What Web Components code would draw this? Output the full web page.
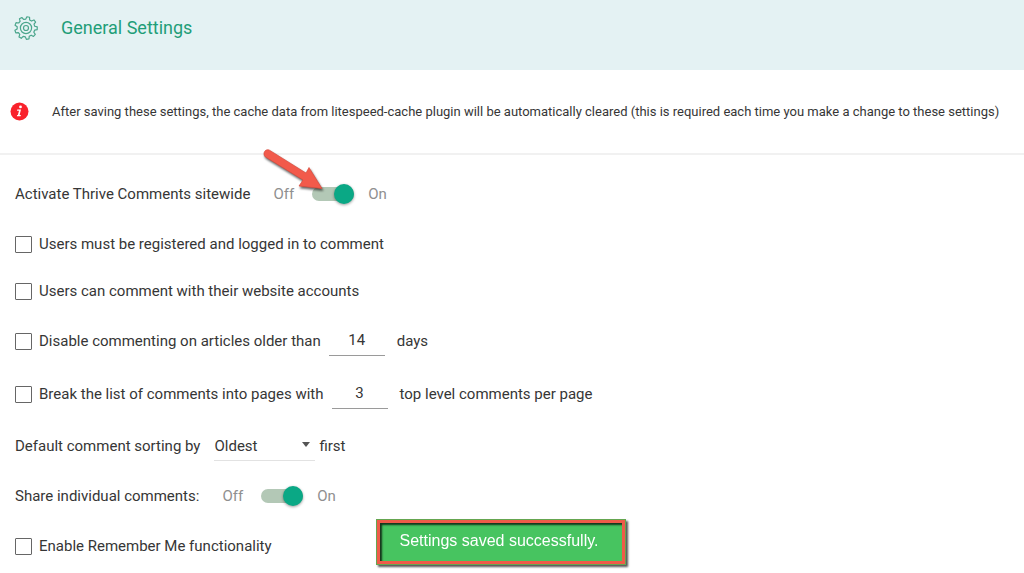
<!DOCTYPE html>
<html lang="en">
<head>
<meta charset="utf-8">
<title>General Settings</title>
<style>
  body { margin: 0; background: #fff; color: #363636; font: 15px/20px Roboto, "Liberation Sans", sans-serif; }
</style>
</head>
<body>
<settings-page></settings-page>

<template id="settings-page">
  <style>
    :host { display: block; }
    main { display: flex; flex-direction: column; padding: 14px 15px 0; }
  </style>
  <settings-header>General Settings</settings-header>
  <settings-notice>After saving these settings, the cache data from litespeed-cache plugin will be automatically cleared (this is required each time you make a change to these settings)</settings-notice>
  <main>
    <toggle-row style="--row: 50px" label="Activate Thrive Comments sitewide" pointed></toggle-row>
    <check-row style="--row: 50px" label="Users must be registered and logged in to comment"></check-row>
    <check-row style="--row: 44px" label="Users can comment with their website accounts"></check-row>
    <check-row style="--row: 56px" label="Disable commenting on articles older than" value="14">days</check-row>
    <check-row style="--row: 50px" label="Break the list of comments into pages with" value="3">top level comments per page</check-row>
    <select-row style="--row: 54px" label="Default comment sorting by">first</select-row>
    <toggle-row style="--row: 46px" label="Share individual comments:"></toggle-row>
    <check-row style="--row: 54px" label="Enable Remember Me functionality"></check-row>
  </main>
  <toast-message>Settings saved successfully.</toast-message>
</template>

<template id="settings-header">
  <style>
    :host { display: block; background: #e4f2f3; }
    header { display: flex; align-items: center; gap: 23px; height: 56px; padding: 0 14px 14px; }
    svg { width: 24px; height: 24px; flex: none; }
    h1 { margin: 0; font-size: 18px; line-height: 24px; font-weight: 400; color: #1f9e78; }
  </style>
  <header>
    <svg viewBox="0 0 24 24" fill="none" stroke="#4ba68c" stroke-width="1.2" stroke-linejoin="round" aria-hidden="true">
      <path id="gear"/>
      <circle cx="12" cy="12" r="5.6"/><circle cx="12" cy="12" r="2.5"/>
    </svg>
    <h1><slot></slot></h1>
  </header>
</template>

<template id="settings-notice">
  <style>
    :host { display: flex; align-items: center; gap: 23px; height: 83px; padding-left: 10px; border-bottom: 2px solid #f1f1f1; font-size: 13px; }
    svg { width: 19px; height: 19px; flex: none; }
    p { margin: 0; }
  </style>
  <svg viewBox="0 0 19 19" aria-hidden="true">
    <circle cx="9.5" cy="9.5" r="9" fill="#f9222c"/>
    <circle cx="10.5" cy="4.9" r="1.4" fill="#fff"/>
    <path d="M7.3 7.4H11l-1.4 5.6h1.3l-.3 1.3H6.9l.3-1.3h.7L9 8.7H7z" fill="#fff"/>
  </svg>
  <p><slot></slot></p>
</template>

<template id="check-row">
  <style>
    :host { display: flex; align-items: center; min-height: var(--row); }
    label { display: flex; align-items: center; gap: 7px; }
    input[type=checkbox] { appearance: none; box-sizing: border-box; width: 17px; height: 17px; margin: 0; border: 1px solid #666; border-radius: 1px; background: #fff; flex: none; }
    input[type=checkbox]:checked { background: #0fa683; }
    .number { box-sizing: border-box; width: 56px; height: 30px; margin: 0 12px 0 8px; padding: 0 0 2px; border: 0; border-bottom: 1px solid #9a9a9a; background: none; color: inherit; font: inherit; text-align: center; outline: 0; }
  </style>
  <label><input type="checkbox"><span class="text"></span></label>
  <input class="number" type="text" inputmode="numeric">
  <span><slot></slot></span>
</template>

<template id="toggle-row">
  <style>
    :host { display: flex; align-items: center; min-height: var(--row); }
    label { display: flex; align-items: center; gap: 23px; }
    .switch { position: relative; display: flex; align-items: center; gap: 14px; color: #8f8f8f; }
    .off { margin-right: 4px; }
    input { appearance: none; display: flex; align-items: center; justify-content: flex-end; width: 42px; height: 14px; margin: 0; border-radius: 7px; background: #b3c8b6; }
    input::before { content: ""; width: 20px; height: 20px; border-radius: 50%; background: #0aa885; box-shadow: 0 1px 3px #0006; }
    input:not(:checked) { justify-content: flex-start; }
    svg { display: none; position: absolute; left: -12px; top: -35px; width: 64px; height: 44px; overflow: visible; pointer-events: none; filter: drop-shadow(1px 2px 1px #0009); }
    :host([pointed]) svg { display: block; }
  </style>
  <label>
    <span class="text"></span>
    <span class="switch">
      <span class="off">Off</span>
      <input type="checkbox" role="switch" checked>
      <span>On</span>
      <svg viewBox="0 0 64 44" aria-hidden="true"><path d="M8.500 1.200C4-1 1 5 4.500 8L42 31l-4 6 23 2.500L48 18.500l-3 5.500z" fill="#f25a4b" stroke="#d84a3c" stroke-width=".7"/></svg>
    </span>
  </label>
</template>

<template id="select-row">
  <style>
    :host { display: flex; align-items: center; gap: 4px; min-height: var(--row); }
    .field { display: grid; align-items: center; margin-left: 10px; width: 101px; }
    select, svg { grid-area: 1 / 1; }
    select { appearance: none; width: 100%; height: 29px; margin: 0; padding: 0; border: 0; border-bottom: 1px solid #e2e2e2; border-radius: 0; background: none; color: inherit; font: inherit; outline: 0; }
    svg { justify-self: end; width: 8px; height: 5px; margin: 0 5px 3px 0; pointer-events: none; }
  </style>
  <label for="sort"></label>
  <span class="field">
    <select id="sort"><option>Oldest</option><option>Newest</option></select>
    <svg viewBox="0 0 8 5" aria-hidden="true"><path d="M0 0h8L4 5z" fill="#555"/></svg>
  </span>
  <span><slot></slot></span>
</template>

<template id="toast-message">
  <style>
    :host { position: fixed; left: 0; right: 22px; bottom: 8px; display: flex; justify-content: center; pointer-events: none; }
    div { box-sizing: border-box; padding: 9px 24px 11px 20px; border: 4px solid #ef5b49; outline: 1px solid #65a650; outline-offset: -1px; background: #47c460; color: #fff; font: 16px/18px "Liberation Sans", Arial, sans-serif; box-shadow: 2px 2px 2px #000a, inset 2px 2px 2px #000b; }
  </style>
  <div role="status"><slot></slot></div>
</template>

<script>
  class TemplateElement extends HTMLElement {
    constructor() {
      super();
      this.attachShadow({ mode: "open" })
        .append(document.getElementById(this.localName).content.cloneNode(true));
    }
    find(selector) { return this.shadowRoot.querySelector(selector); }
  }

  class SettingsHeader extends TemplateElement {
    connectedCallback() {
      const points = [];
      const teeth = 9;
      for (let i = 0; i < teeth; i++) {
        for (const [offset, radius] of [[-.32, 8.9], [-.17, 11.3], [.17, 11.3], [.32, 8.9]]) {
          const angle = (i + offset) / teeth * Math.PI * 2 - Math.PI / 2 + .2;
          points.push((12 + radius * Math.cos(angle)).toFixed(2) + " " + (12 + radius * Math.sin(angle)).toFixed(2));
        }
      }
      this.find("#gear").setAttribute("d", "M" + points.join("L") + "Z");
    }
  }

  class CheckRow extends TemplateElement {
    connectedCallback() {
      this.find(".text").textContent = this.getAttribute("label");
      const number = this.find(".number");
      if (!number) return;
      if (this.hasAttribute("value")) {
        number.value = this.getAttribute("value");
        number.setAttribute("aria-label", this.getAttribute("label"));
      } else {
        number.remove();
      }
    }
  }

  class ToggleRow extends TemplateElement {
    connectedCallback() { this.find(".text").textContent = this.getAttribute("label"); }
  }

  class SelectRow extends TemplateElement {
    connectedCallback() { this.find("label").textContent = this.getAttribute("label"); }
  }

  customElements.define("settings-header", SettingsHeader);
  customElements.define("settings-notice", class extends TemplateElement {});
  customElements.define("check-row", CheckRow);
  customElements.define("toggle-row", ToggleRow);
  customElements.define("select-row", SelectRow);
  customElements.define("toast-message", class extends TemplateElement {});
  customElements.define("settings-page", class extends TemplateElement {});
</script>
</body>
</html>
